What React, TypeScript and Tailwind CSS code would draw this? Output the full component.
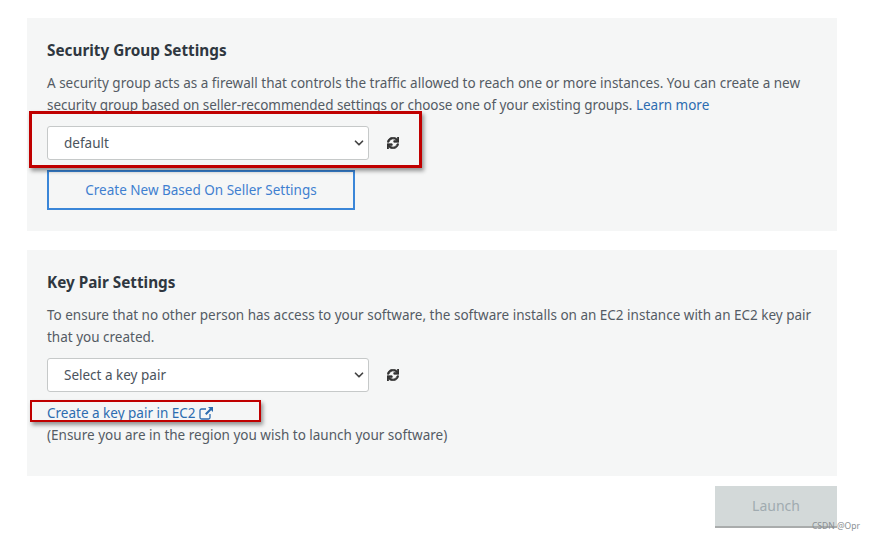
import { ChevronDown } from "lucide-react"
import { FaSync } from "react-icons/fa"

function SelectRow({ label }: { label: string }) {
  return (
    <div className="flex items-center">
      <div className="flex h-[34px] w-[322px] items-center justify-between rounded-[3px] border border-[#c6c9c9] bg-white pl-4 pr-[2px] text-[13.5px] text-[#4b535c]">
        <span>{label}</span>
        <ChevronDown size={14} strokeWidth={3} className="text-[#444]" />
      </div>
      <FaSync size={12} stroke="currentColor" strokeWidth={30} className="ml-[18px] text-[#333]" />
    </div>
  )
}

function ExternalIcon() {
  return (
    <svg width="15" height="14" viewBox="0 0 15 14" fill="none" className="text-[#2c6cb0]">
      <path d="M7 3H2.5A1.5 1.5 0 0 0 1 4.5v7A1.5 1.5 0 0 0 2.5 13h7a1.5 1.5 0 0 0 1.5-1.5V8" stroke="currentColor" strokeWidth="1.3" />
      <path d="M9 1h5v5l-1.8-1.8L7.5 9 6 7.5l4.8-4.7z" fill="currentColor" />
    </svg>
  )
}

export default function App() {
  return (
    <div className="relative h-[540px] w-[875px] overflow-hidden bg-white pt-[18px] pl-[27px] font-['Noto_Sans',sans-serif] text-[14px] leading-[22px] text-[#545b64]">
      <section className="h-[213px] w-[810px] bg-[#f5f6f6] pt-[21px] pl-5 pr-4">
        <h2 className="text-[15.3px] font-bold leading-[22px] text-[#2f3740]">Security Group Settings</h2>
        <p className="mt-[11px] text-[13.5px]">
          A security group acts as a firewall that controls the traffic allowed to reach one or more instances. You can create a new{" "}
          <span className="tracking-[-0.05px]">security group based on seller-recommended settings or choose one of your existing groups.</span>{" "}
          <span className="text-[#2c6cb0]">Learn more</span>
        </p>
        <div className="mt-[10px]">
          <SelectRow label="default" />
        </div>
        <button className="mt-[10px] h-[40px] w-[308px] border-2 border-[#3a86d8] text-[13.5px] text-[#3f7fd0]">
          Create New Based On Seller Settings
        </button>
      </section>

      <section className="mt-[19px] h-[226px] w-[810px] bg-[#f5f6f6] pt-[21px] pl-5 pr-4">
        <h2 className="text-[15.3px] font-bold leading-[22px] text-[#2f3740]">Key Pair Settings</h2>
        <p className="mt-[11px] text-[13.5px]">
          To ensure that no other person has access to your software, the software installs on an EC2 instance with an EC2 key pair that you created.
        </p>
        <div className="mt-[10px]">
          <SelectRow label="Select a key pair" />
        </div>
        <div className="mt-[10px] flex items-center gap-[3px] text-[13.5px] text-[#2c6cb0]">
          <span>Create a key pair in EC2</span>
          <ExternalIcon />
        </div>
        <p className="text-[13.5px]">(Ensure you are in the region you wish to launch your software)</p>
      </section>

      <div className="mt-[10px] flex w-[810px] justify-end">
        <button className="h-[42px] w-[122px] border-b-2 border-[#a9acac] bg-[#d3d9d9] text-[14px] text-[#a0abb0]">Launch</button>
      </div>

      {/* red annotation boxes drawn over the screenshot */}
      <div className="absolute left-[29px] top-[111px] h-[57px] w-[393px] border-[3px] border-[#c00000] shadow-[2px_3px_4px_rgba(0,0,0,0.4)]" />
      <div className="absolute left-[30px] top-[400px] h-[22px] w-[231px] border-[2px] border-[#c00000] shadow-[2px_3px_4px_rgba(0,0,0,0.4)]" />

      <span className="absolute left-[812px] top-[520px] text-[8.5px] leading-[12px] text-[#8a8f93]">CSDN @Opr</span>
    </div>
  )
}
